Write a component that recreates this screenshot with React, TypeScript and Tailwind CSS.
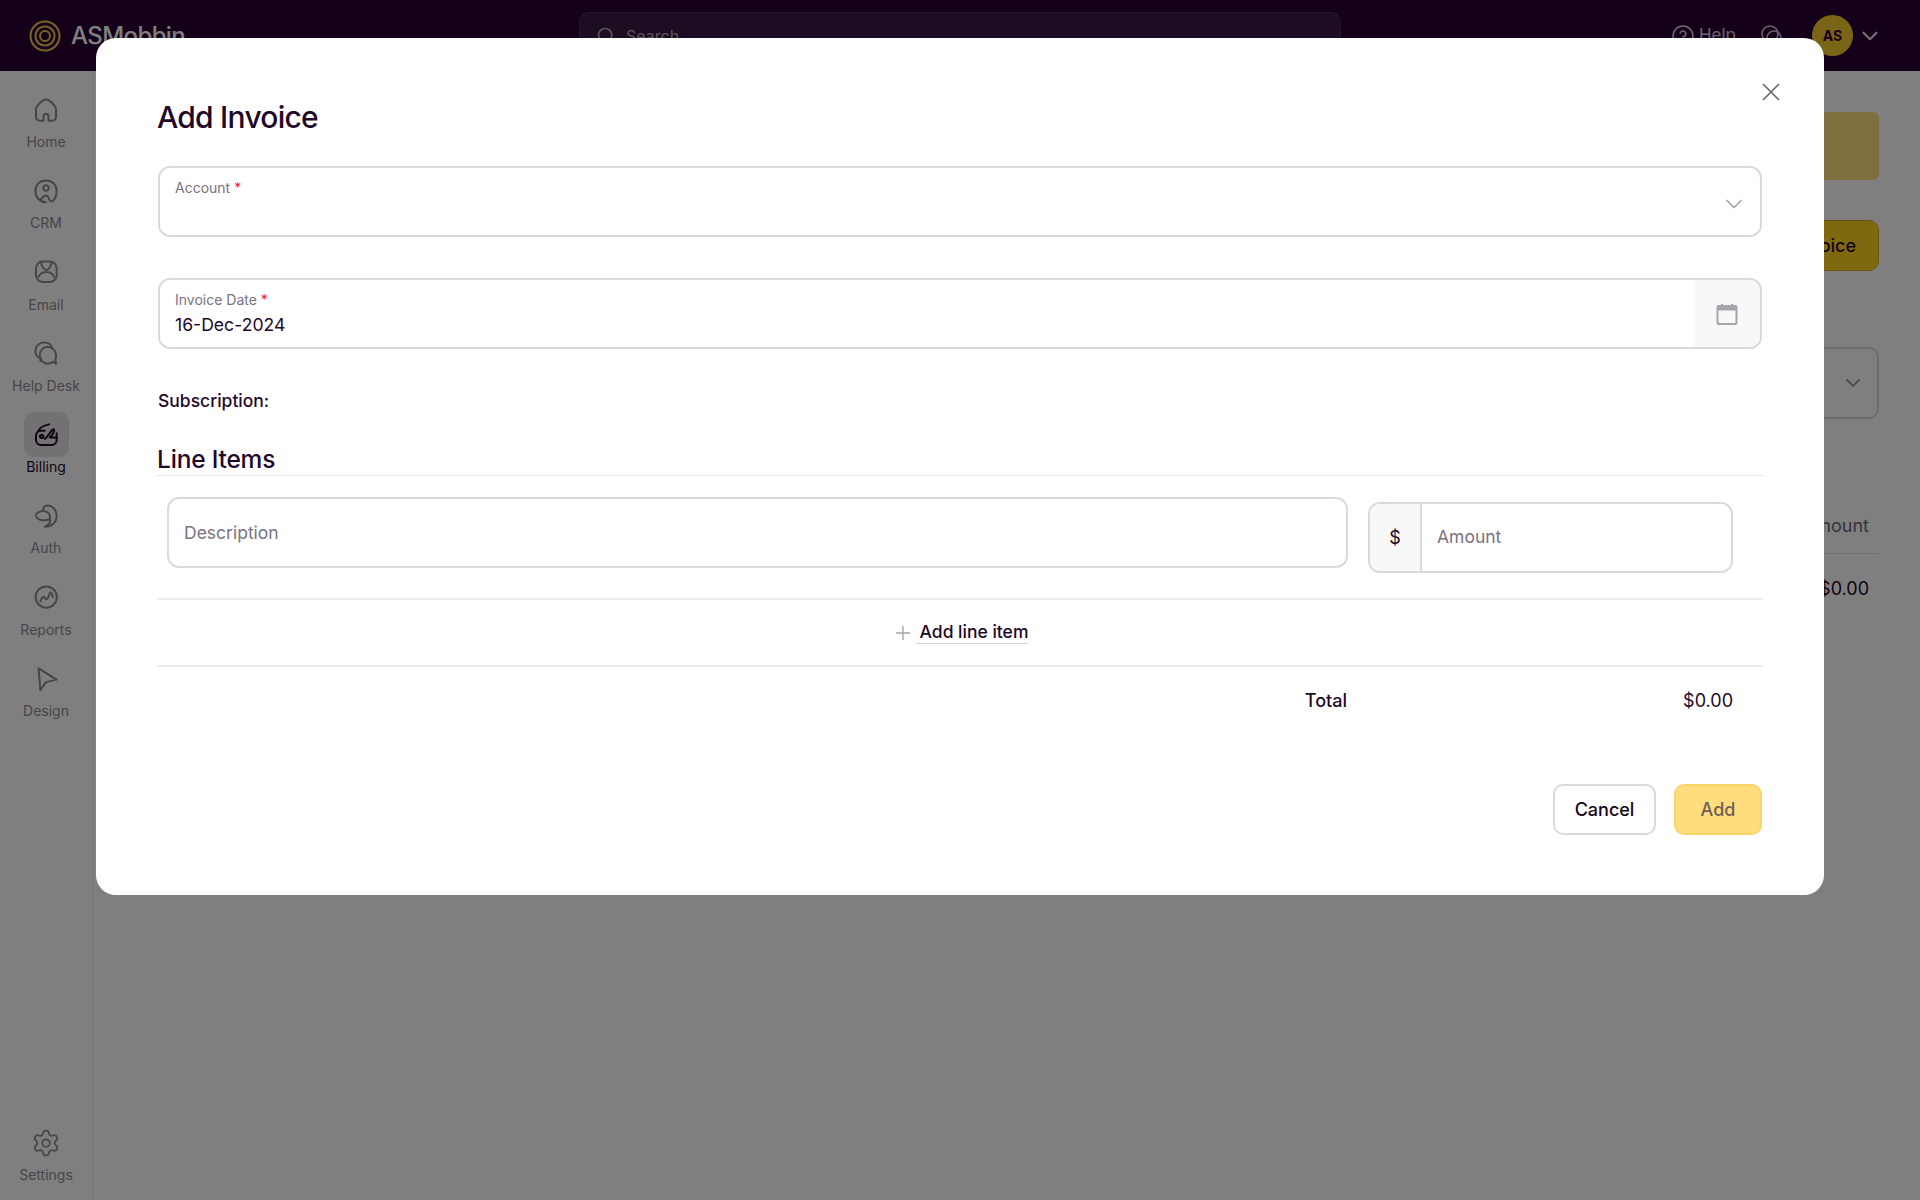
import { ReactNode } from "react";
import { ChevronDown, CircleHelp, Plus, Search, Settings, X } from "lucide-react";

const iconClass = "w-[30px] h-[30px] fill-none stroke-current stroke-[1.6]";

const Icon = ({ children }: { children: ReactNode }) => (
  <svg viewBox="0 0 24 24" className={iconClass} strokeLinecap="round" strokeLinejoin="round">
    {children}
  </svg>
);

const navItems: { label: string; active?: boolean; icon: ReactNode }[] = [
  {
    label: "Home",
    icon: <path d="M10 20.500H7A3 3 0 0 1 4 17.500V11.500C4 9 9 3.500 12 3.500C15 3.500 20 9 20 11.500V17.500A3 3 0 0 1 17 20.500H14V17A2 2 0 0 0 10 17Z" />,
  },
  {
    label: "CRM",
    icon: (
      <>
        <path d="M12 21C7 21 3.500 17 3.500 12C3.500 7 7 3.500 12 3.500C17 3.500 20.500 7 20.500 12C20.500 17.500 18 21 15.500 20C14 19.400 14.500 15.500 12 15.500C9.500 15.500 8.500 18.500 7.500 19" />
        <circle cx="12" cy="9.500" r="2.200" />
      </>
    ),
  },
  {
    label: "Email",
    icon: (
      <>
        <rect x="4" y="3.500" width="16.500" height="16.500" rx="5.500" />
        <path d="M8 4.500C8.500 7.500 10.500 10.500 12.200 10.500C14 10.500 16 7.500 16.500 4.500M6 16C7 13.500 9 12 12.200 12C15.500 12 17.500 13.500 18.500 16" />
      </>
    ),
  },
  {
    label: "Help Desk",
    icon: (
      <>
        <path d="M7.500 18.500L8 16.800C5.500 15.500 3.500 13.500 3.500 10.500C3.500 6.500 6.500 3.500 10.500 3.500C14 3.500 16.500 5.500 17 8.500" />
        <path d="M13 7A6.800 6.800 0 0 0 13 20.500C15 20.500 16.500 20 17.500 19L20 20.500L19.500 17.500C20 16 20 15 20 13.500A7 7 0 0 0 13 7Z" />
      </>
    ),
  },
  {
    label: "Billing",
    active: true,
    icon: (
      <>
        <path d="M20.500 10.500V16A4 4 0 0 1 16.500 20H8A4 4 0 0 1 4 16V12.500A4 4 0 0 1 8 8.500H11" />
        <path d="M6 8.500C7 6 10 4.500 14.500 3.500M11 15C13 14 15 10 17 8C18 7 19 7.500 18.500 9C18 10.500 17 12.500 15 14H20.500" />
        <circle cx="8.500" cy="13" r="1.300" />
      </>
    ),
  },
  {
    label: "Auth",
    icon: (
      <>
        <path d="M13 3.500C18 3.500 20.500 8 20.500 12C20.500 17 16.500 20.500 11 20.500C14.500 19 16 16.500 15 14.500C12 16 5 16 4 12C3.500 9.500 7.500 8 10 8C9 5.500 11 3.500 13 3.500Z" />
        <path d="M10 8C13.500 8 16 11 15 14.500" />
      </>
    ),
  },
  {
    label: "Reports",
    icon: (
      <>
        <circle cx="12.200" cy="12" r="8.500" />
        <path d="M7.500 15.500C8.500 13 9.500 11.500 10.500 12C11.500 12.500 11.500 14.500 13 13.500C14.500 12.500 14.500 8 16 8.500C17 9 17 11 17.500 12" />
      </>
    ),
  },
  {
    label: "Design",
    icon: <path d="M6 3.500L20.500 12.500L12 14.500L7.500 21Z" />,
  },
];

function NavItem({ label, active, icon }: { label: string; active?: boolean; icon: ReactNode }) {
  return (
    <div className="flex flex-col items-center">
      <div className={`w-[45px] h-[45px] rounded-[10px] flex items-center justify-center ${active ? "bg-[#e8e2ea] text-[#1f0829]" : "text-[#8f8b92]"}`}>
        {icon}
      </div>
      <span className={`text-[14px] leading-5 ${active ? "text-[#1f0829]" : "text-[#8f8b92]"}`}>{label}</span>
    </div>
  );
}

function Logo() {
  return (
    <svg viewBox="0 0 32 32" className="w-[32px] h-[32px] fill-none stroke-[#f2c84b] stroke-[2]">
      <circle cx="16" cy="16" r="14.500" />
      <path d="M16 6.500C21.500 6.500 25.500 10.500 25.500 16C25.500 21.500 21.500 25.500 16 25.500C10.500 25.500 6.500 21.500 6.500 16C6.500 10.500 10.500 6.500 16 6.500Z" />
      <circle cx="16" cy="16" r="5" />
    </svg>
  );
}

function Page() {
  return (
    <div className="h-screen w-full flex flex-col bg-white overflow-hidden">
      <header className="h-[71px] shrink-0 bg-[#280332] flex items-center text-white">
        <div className="w-[579px] shrink-0 flex items-center pl-[29px] gap-[10px]">
          <Logo />
          <span className="text-[24px] font-medium tracking-[-0.6px] text-[#ffffff]">ASMobbin</span>
        </div>
        <div className="w-[762px] h-[47px] shrink-0 rounded-[10px] border border-[#4b2c55] bg-[#3a1a44] flex items-center pl-[16px] gap-[10px] text-[#b8a9bd]">
          <Search size={20} />
          <span className="text-[16px]">Search</span>
        </div>
        <div className="flex-1 flex items-center justify-end pr-[37px]">
          <CircleHelp size={24} className="text-[#d8d0da]" strokeWidth={1.5} />
          <span className="ml-[4px] text-[17px] text-[#d8d0da]">Help</span>
          <svg viewBox="0 0 24 24" className="ml-[24px] w-[24px] h-[24px] fill-none stroke-[#d8d0da] stroke-[1.5]">
            <circle cx="10" cy="10" r="8" />
            <circle cx="14" cy="14" r="7" />
          </svg>
          <div className="ml-[28px] w-[41px] h-[41px] rounded-full bg-[#f5c92a] flex items-center justify-center text-[#280332] text-[14px] font-bold">AS</div>
          <ChevronDown size={26} className="ml-[4px] text-[#e8e2ea]" />
        </div>
      </header>
      <div className="flex-1 flex min-h-0">
        <aside className="w-[93px] shrink-0 border-r border-[#e8e4e9] flex flex-col justify-between pt-[16px] pb-[15px]">
          <nav className="flex flex-col gap-[16.300px]">
            {navItems.map((item) => (
              <NavItem key={item.label} label={item.label} active={item.active} icon={<Icon>{item.icon}</Icon>} />
            ))}
          </nav>
          <NavItem label="Settings" icon={<Settings size={30} strokeWidth={1.4} />} />
        </aside>
        <main className="flex-1 flex flex-col items-end pt-[41px] pr-[41px] pl-[24px]">
          <div className="w-full h-[68px] rounded-[6px] bg-[#ffdf7e]" />
          <button className="mt-[40px] h-[51px] px-[22px] rounded-[10px] border border-[#d4a92a] bg-[#ffd21f] text-[#280332] text-[18px] font-medium">
            Create Invoice
          </button>
          <div className="mt-[76px] w-[500px] h-[72px] rounded-[10px] border-2 border-[#d9d6da] flex items-center justify-end pr-[12px] text-[#a29aa5]">
            <ChevronDown size={24} />
          </div>
          <div className="mt-[93px] w-full border-b border-[#e3dfe4] pb-[14px] pr-[10px] text-right text-[18px] text-[#6f6573]">Amount</div>
          <div className="mt-[21px] w-full pr-[10px] text-right text-[18px] text-[#1f0829]">$0.00</div>
        </main>
      </div>
    </div>
  );
}

const fieldClass = "rounded-[12px] border-2 border-[#dcd9dc] bg-white";

function Required() {
  return <span className="text-[#f0252d]"> *</span>;
}

function AddInvoiceModal() {
  return (
    <div className="fixed inset-0 bg-black/50">
      <div className="absolute left-[96px] top-[38px] w-[1728px] h-[857px] rounded-[20px] bg-white pt-[61px] px-[61px] text-[#1f0829]">
        <button className="absolute top-[39px] right-[38px] text-[#6f6973]">
          <X size={30} strokeWidth={1.4} />
        </button>
        <h1 className="text-[30px] leading-[36px] font-medium tracking-[-0.75px]">Add Invoice</h1>

        <div className={`mt-[31px] mx-px h-[71px] pl-[15px] pr-[12px] pt-[10px] flex justify-between ${fieldClass}`}>
          <span className="text-[14px] leading-5 text-[#7b7280]">
            Account<Required />
          </span>
          <ChevronDown size={28} strokeWidth={1.5} className="mt-[12px] text-[#a9a3ac]" />
        </div>

        <div className={`mt-[41px] mx-px h-[71px] flex overflow-hidden ${fieldClass}`}>
          <div className="flex-1 pl-[15px] pt-[10px]">
            <div className="text-[14px] leading-5 text-[#7b7280]">
              Invoice Date<Required />
            </div>
            <input readOnly value="16-Dec-2024" className="w-full text-[17.600px] leading-6 mt-[3px] outline-none" />
          </div>
          <div className="w-[66px] bg-[#f9f8f9] flex items-center justify-center">
            <svg viewBox="0 0 24 24" className="w-[24px] h-[24px] fill-none stroke-[#a9a3ac] stroke-2">
              <rect x="2.500" y="4" width="19" height="18" rx="1" />
              <path d="M2.500 6.500H21.500" strokeWidth={4} />
              <path d="M7 2V4M17 2V4" />
            </svg>
          </div>
        </div>

        <div className="mt-[40px] mx-px text-[17.500px] leading-6 font-medium">Subscription:</div>

        <h2 className="mt-[30px] h-[33px] text-[24.500px] leading-[32px] font-medium tracking-[-0.2px] border-b border-[#e4e2e5]">Line Items</h2>

        <div className="flex items-start pl-[10px] pr-[30px] pt-[21px] h-[124px] border-b-2 border-[#ecebec]">
          <input placeholder="Description" className={`flex-1 h-[71px] pl-[15px] text-[17.500px] outline-none placeholder:text-[#7b7280] ${fieldClass}`} />
          <div className={`ml-[20px] mt-[5px] w-[365px] h-[71px] flex overflow-hidden ${fieldClass}`}>
            <div className="w-[52px] border-r-2 border-[#dcd9dc] bg-[#f9f8f9] flex items-center justify-center text-[18px]">$</div>
            <input placeholder="Amount" className="flex-1 min-w-0 pl-[15px] text-[17.500px] outline-none placeholder:text-[#7b7280]" />
          </div>
        </div>

        <div className="h-[67px] border-b-2 border-[#ecebec] flex items-center justify-center">
          <Plus size={22} strokeWidth={1.5} className="text-[#a9a3ac]" />
          <span className="ml-[2px] pl-[4px] text-[17.500px] leading-[22px] font-medium border-b border-[#d8d5d9]">Add line item</span>
        </div>

        <div className="mt-[22px] flex pr-[30px] text-[18px] leading-6 font-medium">
          <div className="flex-1 text-right">Total</div>
          <div className="w-[386px] text-right font-normal">$0.00</div>
        </div>

        <div className="mt-[71px] flex justify-end gap-[18px] pr-px">
          <button className="w-[103px] h-[51px] rounded-[10px] border-2 border-[#dcd9dc] text-[18px] font-medium text-[#14061a]">Cancel</button>
          <button className="w-[88px] h-[51px] rounded-[10px] border-2 border-[#fad66a] bg-[#ffdd7c] text-[18px] font-medium text-[#6f5f55]">Add</button>
        </div>
      </div>
    </div>
  );
}

export default function App() {
  return (
    <div className="relative font-['Inter',sans-serif]">
      <Page />
      <AddInvoiceModal />
    </div>
  );
}
